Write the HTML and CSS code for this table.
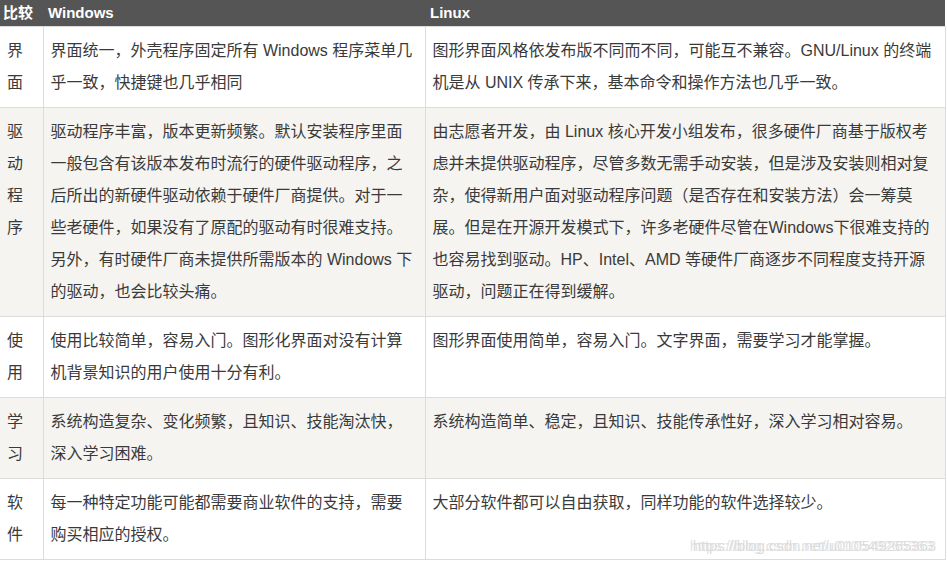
FILE: index.html
```html
<!DOCTYPE html>
<html lang="zh-CN">
<head>
<meta charset="utf-8">
<title>Windows 与 Linux 比较</title>
<link rel="stylesheet" href="styles.css">
</head>
<body>
<div class="wrap">
  <table class="cmp">
    <colgroup>
      <col class="c1">
      <col class="c2">
      <col class="c3">
    </colgroup>
    <thead>
      <tr>
        <th class="h1">比较</th>
        <th>Windows</th>
        <th>Linux</th>
      </tr>
    </thead>
    <tbody>
      <tr>
        <td>界面</td>
        <td>界面统一，外壳程序固定所有 Windows 程序菜单几乎一致，快捷键也几乎相同</td>
        <td>图形界面风格依发布版不同而不同，可能互不兼容。GNU/Linux 的终端机是从 UNIX 传承下来，基本命令和操作方法也几乎一致。</td>
      </tr>
      <tr>
        <td>驱动程序</td>
        <td>驱动程序丰富，版本更新频繁。默认安装程序里面一般包含有该版本发布时流行的硬件驱动程序，之后所出的新硬件驱动依赖于硬件厂商提供。对于一些老硬件，如果没有了原配的驱动有时很难支持。另外，有时硬件厂商未提供所需版本的 Windows 下的驱动，也会比较头痛。</td>
        <td>由志愿者开发，由 Linux 核心开发小组发布，很多硬件厂商基于版权考虑并未提供驱动程序，尽管多数无需手动安装，但是涉及安装则相对复杂，使得新用户面对驱动程序问题（是否存在和安装方法）会一筹莫展。但是在开源开发模式下，许多老硬件尽管在Windows下很难支持的也容易找到驱动。HP、Intel、AMD 等硬件厂商逐步不同程度支持开源驱动，问题正在得到缓解。</td>
      </tr>
      <tr>
        <td>使用</td>
        <td>使用比较简单，容易入门。图形化界面对没有计算机背景知识的用户使用十分有利。</td>
        <td>图形界面使用简单，容易入门。文字界面，需要学习才能掌握。</td>
      </tr>
      <tr>
        <td>学习</td>
        <td>系统构造复杂、变化频繁，且知识、技能淘汰快，深入学习困难。</td>
        <td>系统构造简单、稳定，且知识、技能传承性好，深入学习相对容易。</td>
      </tr>
      <tr>
        <td>软件</td>
        <td>每一种特定功能可能都需要商业软件的支持，需要购买相应的授权。</td>
        <td>大部分软件都可以自由获取，同样功能的软件选择较少。</td>
      </tr>
    </tbody>
  </table>
  <div class="wm" aria-hidden="true">https://blog.csdn.net/u010549265363</div>
</div>
</body>
</html>
```

FILE: styles.css
```css
html, body {
  margin: 0;
  padding: 0;
  background: #ffffff;
}

body {
  font-family: "Liberation Sans", "Noto Sans CJK SC", sans-serif;
  font-size: 16px;
  color: #3a3a3a;
}

.wrap {
  position: relative;
  width: 945px;
}

.cmp {
  width: 945px;
  table-layout: fixed;
  border-collapse: collapse;
  border-spacing: 0;
}

.c1 { width: 43px; }
.c2 { width: 382px; }
.c3 { width: 520px; }

.cmp th {
  background: #555555;
  color: #ffffff;
  font-size: 15px;
  font-weight: bold;
  text-align: left;
  height: 26px;
  line-height: 20px;
  padding: 0 5px;
  white-space: nowrap;
  border: none;
}

.cmp th.h1 {
  padding: 0 2px 0 3px;
}

.cmp td {
  vertical-align: top;
  line-height: 32px;
  padding: 8px 7px;
  border: 1px solid #dcdcdc;
  word-break: normal;
}

.cmp td:first-child {
  border-left: none;
}

.cmp tbody tr:nth-child(even) td {
  background: #f5f4f1;
}

.wm {
  position: absolute;
  right: 9px;
  bottom: 6px;
  font-family: "Liberation Sans", sans-serif;
  font-size: 15px;
  line-height: 16px;
  letter-spacing: -0.1px;
  color: #dcdcdc;
  text-shadow: -3px 0 0 rgba(220, 220, 220, 0.8);
  white-space: nowrap;
}
```
